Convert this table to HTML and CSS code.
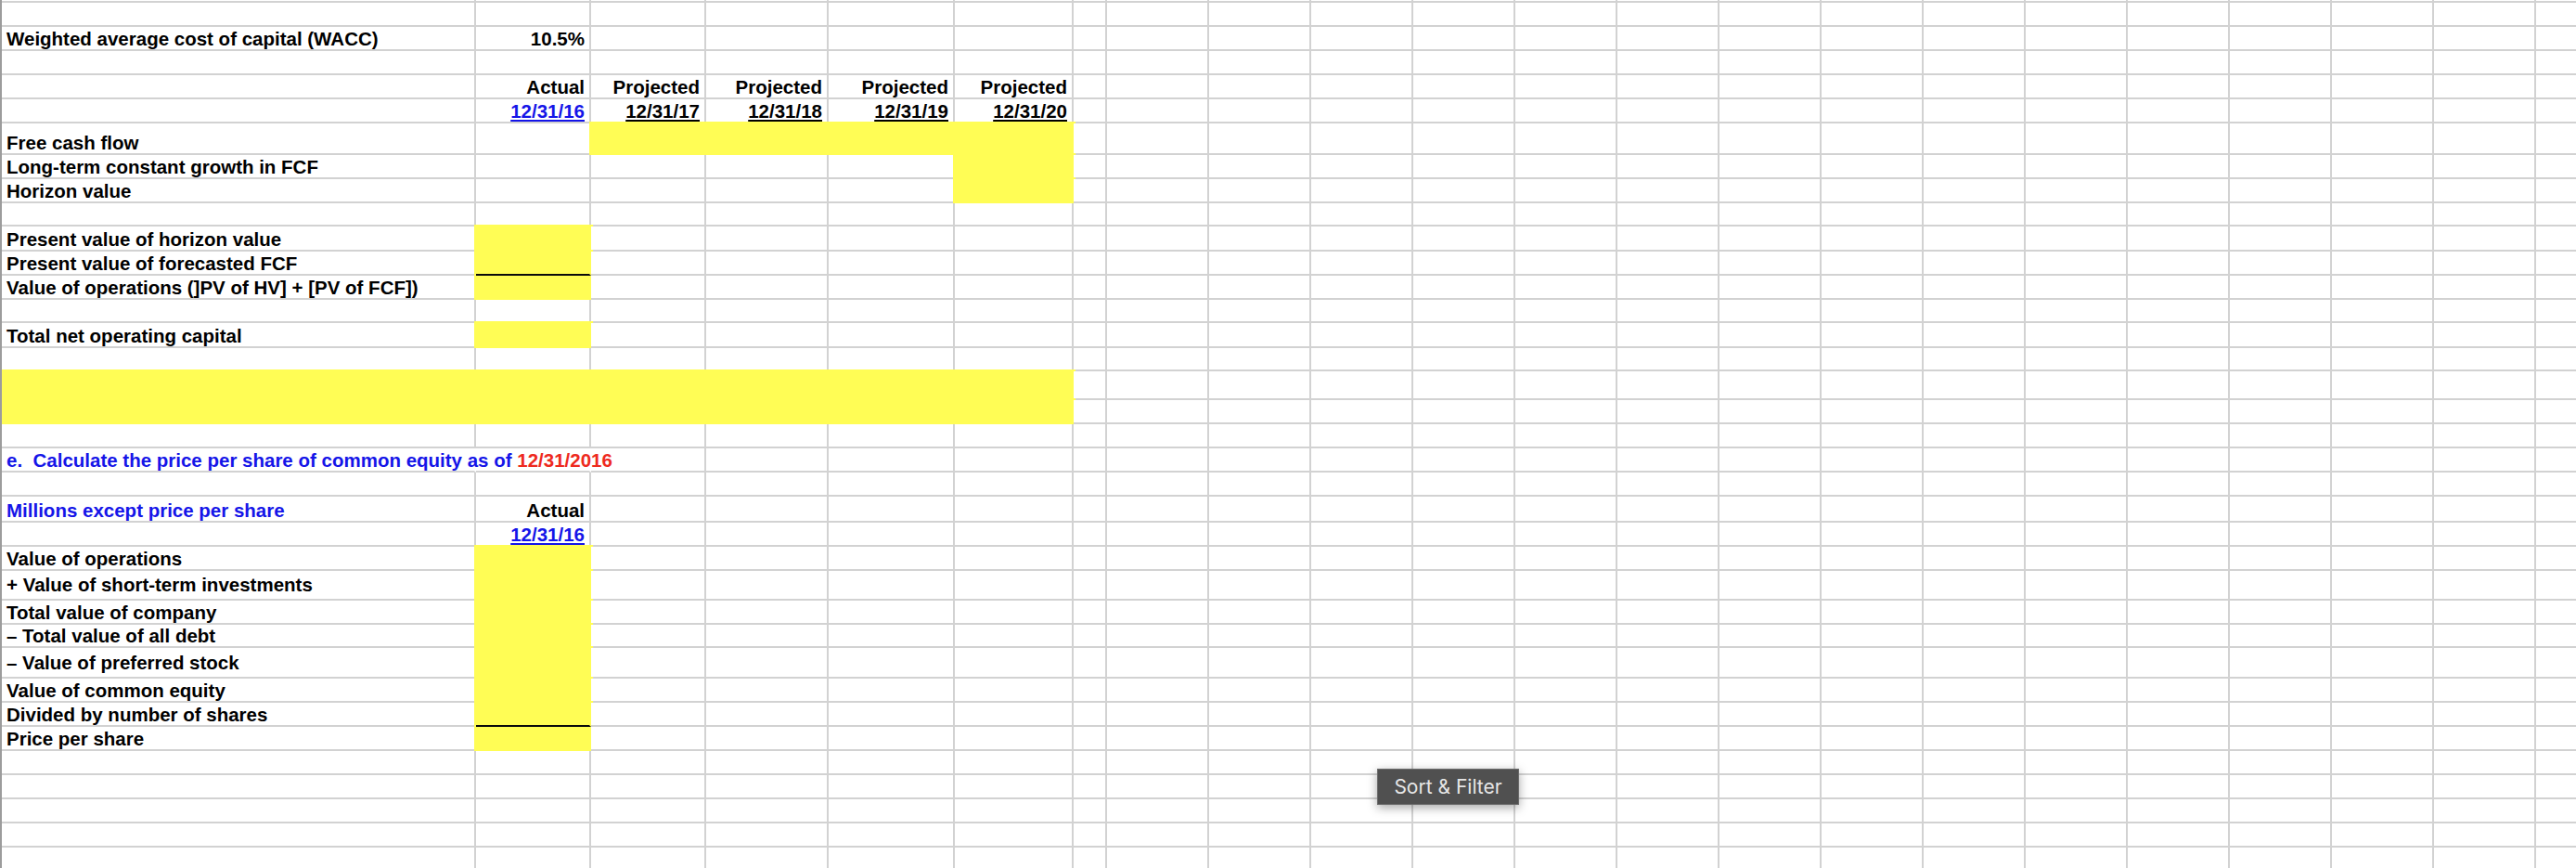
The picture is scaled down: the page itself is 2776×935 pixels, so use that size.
FILE: index.html
```html
<!DOCTYPE html>
<html lang="en">
<head>
<meta charset="utf-8">
<title>DCF valuation worksheet</title>
<link rel="stylesheet" href="styles.css">
</head>
<body>
<div class="sheet">
  <!-- r0 (cut off) -->
  <div class="c"></div><div class="c"></div><div class="c"></div><div class="c"></div><div class="c"></div><div class="c"></div><div class="c"></div><div class="tail"></div>
  <!-- r1 -->
  <div class="c"></div><div class="c"></div><div class="c"></div><div class="c"></div><div class="c"></div><div class="c"></div><div class="c"></div><div class="tail"></div>
  <!-- r2 -->
  <div class="c"><span>Weighted average cost of capital (WACC)</span></div><div class="c r"><span>10.5%</span></div><div class="c"></div><div class="c"></div><div class="c"></div><div class="c"></div><div class="c"></div><div class="tail"></div>
  <!-- r3 -->
  <div class="c"></div><div class="c"></div><div class="c"></div><div class="c"></div><div class="c"></div><div class="c"></div><div class="c"></div><div class="tail"></div>
  <!-- r4 -->
  <div class="c"></div><div class="c r"><span>Actual</span></div><div class="c r"><span>Projected</span></div><div class="c r"><span>Projected</span></div><div class="c r"><span>Projected</span></div><div class="c r"><span>Projected</span></div><div class="c"></div><div class="tail"></div>
  <!-- r5 -->
  <div class="c"></div><div class="c r"><span class="u blue">12/31/16</span></div><div class="c r"><span class="u">12/31/17</span></div><div class="c r"><span class="u">12/31/18</span></div><div class="c r"><span class="u">12/31/19</span></div><div class="c r"><span class="u">12/31/20</span></div><div class="c"></div><div class="tail"></div>
  <!-- r6 -->
  <div class="c"><span>Free cash flow</span></div><div class="c"></div><div class="c fill"></div><div class="c fill"></div><div class="c fill"></div><div class="c fill"></div><div class="c"></div><div class="tail"></div>
  <!-- r7 -->
  <div class="c"><span>Long-term constant growth in FCF</span></div><div class="c"></div><div class="c"></div><div class="c"></div><div class="c"></div><div class="c fill"></div><div class="c"></div><div class="tail"></div>
  <!-- r8 -->
  <div class="c"><span>Horizon value</span></div><div class="c"></div><div class="c"></div><div class="c"></div><div class="c"></div><div class="c fill"></div><div class="c"></div><div class="tail"></div>
  <!-- r9 -->
  <div class="c"></div><div class="c"></div><div class="c"></div><div class="c"></div><div class="c"></div><div class="c"></div><div class="c"></div><div class="tail"></div>
  <!-- r10 -->
  <div class="c"><span>Present value of horizon value</span></div><div class="c fill"></div><div class="c"></div><div class="c"></div><div class="c"></div><div class="c"></div><div class="c"></div><div class="tail"></div>
  <!-- r11 -->
  <div class="c"><span>Present value of forecasted FCF</span></div><div class="c fill rule"></div><div class="c"></div><div class="c"></div><div class="c"></div><div class="c"></div><div class="c"></div><div class="tail"></div>
  <!-- r12 -->
  <div class="c"><span>Value of operations (]PV of HV] + [PV of FCF])</span></div><div class="c fill below-rule"></div><div class="c"></div><div class="c"></div><div class="c"></div><div class="c"></div><div class="c"></div><div class="tail"></div>
  <!-- r13 -->
  <div class="c"></div><div class="c"></div><div class="c"></div><div class="c"></div><div class="c"></div><div class="c"></div><div class="c"></div><div class="tail"></div>
  <!-- r14 -->
  <div class="c"><span>Total net operating capital</span></div><div class="c fill"></div><div class="c"></div><div class="c"></div><div class="c"></div><div class="c"></div><div class="c"></div><div class="tail"></div>
  <!-- r15 -->
  <div class="c"></div><div class="c"></div><div class="c"></div><div class="c"></div><div class="c"></div><div class="c"></div><div class="c"></div><div class="tail"></div>
  <!-- r16 -->
  <div class="c fill first"></div><div class="c fill"></div><div class="c fill"></div><div class="c fill"></div><div class="c fill"></div><div class="c fill"></div><div class="c"></div><div class="tail"></div>
  <!-- r17 -->
  <div class="c fill first"></div><div class="c fill"></div><div class="c fill"></div><div class="c fill"></div><div class="c fill"></div><div class="c fill"></div><div class="c"></div><div class="tail"></div>
  <!-- r18 -->
  <div class="c"></div><div class="c"></div><div class="c"></div><div class="c"></div><div class="c"></div><div class="c"></div><div class="c"></div><div class="tail"></div>
  <!-- r19 -->
  <div class="c spill"><span class="blue heading">e.  Calculate the price per share of common equity as of <span class="red">12/31/2016</span></span></div><div class="c spill"></div><div class="c spill-end"></div><div class="c"></div><div class="c"></div><div class="c"></div><div class="c"></div><div class="tail"></div>
  <!-- r20 -->
  <div class="c"></div><div class="c"></div><div class="c"></div><div class="c"></div><div class="c"></div><div class="c"></div><div class="c"></div><div class="tail"></div>
  <!-- r21 -->
  <div class="c"><span class="blue">Millions except price per share</span></div><div class="c r"><span>Actual</span></div><div class="c"></div><div class="c"></div><div class="c"></div><div class="c"></div><div class="c"></div><div class="tail"></div>
  <!-- r22 -->
  <div class="c"></div><div class="c r"><span class="u blue">12/31/16</span></div><div class="c"></div><div class="c"></div><div class="c"></div><div class="c"></div><div class="c"></div><div class="tail"></div>
  <!-- r23 -->
  <div class="c"><span>Value of operations</span></div><div class="c fill"></div><div class="c"></div><div class="c"></div><div class="c"></div><div class="c"></div><div class="c"></div><div class="tail"></div>
  <!-- r24 -->
  <div class="c raised"><span>+ Value of short-term investments</span></div><div class="c fill"></div><div class="c"></div><div class="c"></div><div class="c"></div><div class="c"></div><div class="c"></div><div class="tail"></div>
  <!-- r25 -->
  <div class="c"><span>Total value of company</span></div><div class="c fill"></div><div class="c"></div><div class="c"></div><div class="c"></div><div class="c"></div><div class="c"></div><div class="tail"></div>
  <!-- r26 -->
  <div class="c"><span>– Total value of all debt</span></div><div class="c fill"></div><div class="c"></div><div class="c"></div><div class="c"></div><div class="c"></div><div class="c"></div><div class="tail"></div>
  <!-- r27 -->
  <div class="c raised"><span>– Value of preferred stock</span></div><div class="c fill"></div><div class="c"></div><div class="c"></div><div class="c"></div><div class="c"></div><div class="c"></div><div class="tail"></div>
  <!-- r28 -->
  <div class="c"><span>Value of common equity</span></div><div class="c fill"></div><div class="c"></div><div class="c"></div><div class="c"></div><div class="c"></div><div class="c"></div><div class="tail"></div>
  <!-- r29 -->
  <div class="c"><span>Divided by number of shares</span></div><div class="c fill rule"></div><div class="c"></div><div class="c"></div><div class="c"></div><div class="c"></div><div class="c"></div><div class="tail"></div>
  <!-- r30 -->
  <div class="c"><span>Price per share</span></div><div class="c fill below-rule"></div><div class="c"></div><div class="c"></div><div class="c"></div><div class="c"></div><div class="c"></div><div class="tail"></div>
  <!-- r31 -->
  <div class="c"></div><div class="c"></div><div class="c"></div><div class="c"></div><div class="c"></div><div class="c"></div><div class="c"></div><div class="tail"></div>
  <!-- r32 -->
  <div class="c"></div><div class="c"></div><div class="c"></div><div class="c"></div><div class="c"></div><div class="c"></div><div class="c"></div><div class="tail"></div>
  <!-- r33 -->
  <div class="c"></div><div class="c"></div><div class="c"></div><div class="c"></div><div class="c"></div><div class="c"></div><div class="c"></div><div class="tail"></div>
  <!-- r34 -->
  <div class="c"></div><div class="c"></div><div class="c"></div><div class="c"></div><div class="c"></div><div class="c"></div><div class="c"></div><div class="tail"></div>
  <!-- r35 -->
  <div class="c"></div><div class="c"></div><div class="c"></div><div class="c"></div><div class="c"></div><div class="c"></div><div class="c"></div><div class="tail"></div>
</div>
<div class="tip">Sort &amp; Filter</div>
</body>
</html>
```

FILE: styles.css
```css
html, body {
  margin: 0;
  padding: 0;
  background: #ffffff;
  overflow: hidden;
  width: 2776px;
  height: 935px;
}

body {
  position: relative;
  font-family: "Liberation Sans", Arial, sans-serif;
  font-weight: bold;
  font-size: 20.5px;
  color: #000000;
}

.sheet {
  display: grid;
  margin-top: -23px;
  border-left: 2px solid #9c9c9c;
  grid-template-columns: 511px 124px 124px 132px 136px 128px 36px 1650px;
  grid-template-rows:
    26px 26px 26px 26px 26px 26px 34px 26px 26px 25px
    27px 26px 26px 25px 27px 25px 31px 26px 26px 26px
    26px 28px 26px 26px 32px 26px 25px 33px 26px 26px
    26px 26px 26px 26px 26px 26px;
}

.c {
  box-sizing: border-box;
  min-width: 0;
  display: flex;
  align-items: flex-end;
  padding: 0 5px 0 5px;
  line-height: 22px;
  white-space: nowrap;
  background: #ffffff;
  border-right: 2px solid #d2d2d2;
  border-bottom: 2px solid #d2d2d2;
}

.r {
  justify-content: flex-end;
}

.raised {
  padding-bottom: 4px;
}

.tail {
  box-sizing: border-box;
  border-bottom: 2px solid #d2d2d2;
  background: repeating-linear-gradient(90deg, #ffffff 0 108px, #d2d2d2 108px 110px);
}

.u {
  text-decoration: underline;
  text-decoration-thickness: 2px;
  text-underline-offset: 2px;
}

.blue {
  color: #1515e8;
}

.red {
  color: #ee2a1e;
}

.heading {
  white-space: pre;
}

.fill {
  background: #fffd55;
  border-color: #fffd55;
  box-shadow: 0 0 0 2px #fffd55;
}

.fill.first {
  box-shadow: 0 -2px 0 0 #fffd55;
}

.fill.rule {
  border-bottom-color: #0a0a0a;
}

.fill.below-rule {
  box-shadow: -2px 0 0 0 #fffd55;
}

.spill {
  background: transparent;
  border-right-color: transparent;
}

.spill-end {
  background: transparent;
}

.tip {
  position: absolute;
  left: 1484px;
  top: 828px;
  box-sizing: border-box;
  width: 153px;
  height: 39px;
  display: flex;
  align-items: center;
  justify-content: center;
  background: #505050;
  border: 1px solid #6c6c6c;
  color: #e6e6e6;
  font-family: Inter, "Noto Sans", sans-serif;
  font-weight: normal;
  font-size: 21px;
  box-shadow: 0 3px 10px rgba(0, 0, 0, 0.35);
}
```
